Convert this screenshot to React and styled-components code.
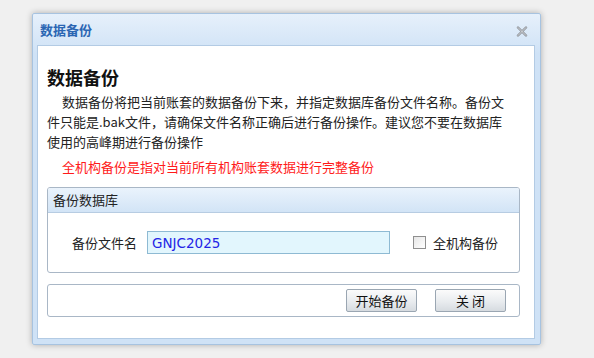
import React from "react";
import styled, { createGlobalStyle } from "styled-components";

const Global = createGlobalStyle`
  html, body { margin: 0; padding: 0; background: #f0f0f0; }
  body { font-family: "Noto Sans CJK SC", "Microsoft YaHei", sans-serif; font-size: 13px; color: #222; }
`;

const Page = styled.div`
  width: 594px;
  height: 358px;
  padding: 13px 0 0 32px;
  box-sizing: border-box;
`;

const Window = styled.div`
  width: 509px;
  height: 332px;
  box-sizing: border-box;
  border: 1px solid #a7c3e0;
  border-radius: 2px;
  background: linear-gradient(#e6f0fb, #cfe2f6 40px, #cfe2f6);
  box-shadow: 0 0 6px rgba(0,0,0,0.28);
  display: flex;
  flex-direction: column;
  padding: 0 5px 5px 4px;
`;

const TitleBar = styled.div`
  height: 31px;
  display: flex;
  align-items: center;
  justify-content: space-between;
  padding: 0 6px 0 3px;
`;

const Title = styled.span`
  font-weight: bold;
  font-size: 13px;
  color: #2b66b3;
`;

const Close = styled.span`
  width: 14px;
  height: 14px;
  display: flex;
  align-items: center;
  justify-content: center;
  margin-top: 3px;
`;

const Content = styled.div`
  flex: 1;
  background: #fff;
  border: 1px solid #b3cbe4;
  padding: 19px 14px 0 9px;
  display: flex;
  flex-direction: column;
`;

const Heading = styled.h1`
  margin: 0;
  font-size: 18px;
  line-height: 24px;
  font-weight: bold;
  color: #111;
`;

const Para = styled.p`
  margin: 3px 0 0;
  line-height: 20px;
  text-indent: 15px;
  color: #222;
`;

const Warn = styled.p`
  margin: 5px 0 0;
  padding-left: 15px;
  line-height: 20px;
  color: #ff1a1a;
`;

const Panel = styled.div`
  margin-top: ${p => p.$gap}px;
  border: 1px solid #a9b7c6;
  border-radius: 3px;
  background: #fff;
  overflow: hidden;
`;

const PanelHead = styled.div`
  height: 24px;
  line-height: 24px;
  padding-left: 5px;
  background: linear-gradient(#eaf3fc, #d2e4f6);
  border-bottom: 1px solid #b7cce2;
  color: #222;
`;

const FieldRow = styled.div`
  height: 59px;
  display: flex;
  align-items: center;
  padding-left: 24px;
  box-sizing: border-box;
`;

const Label = styled.label`
  width: 65px;
  margin-right: 10px;
`;

const Input = styled.input`
  width: 243px;
  height: 23px;
  box-sizing: border-box;
  border: 1px solid #8ebad3;
  background: #e2f6fd;
  color: #2424e6;
  font-family: "DejaVu Sans", Tahoma, sans-serif;
  font-size: 13.5px;
  padding: 0 0 0 4px;
  outline: none;
`;

const Check = styled.span`
  width: 13px;
  height: 13px;
  box-sizing: border-box;
  border: 1px solid #8f8f8f;
  background: linear-gradient(135deg, #e6e6e6, #ffffff);
  margin: 0 7px 0 23px;
`;

const ButtonBar = styled.div`
  height: 31px;
  display: flex;
  align-items: center;
  justify-content: flex-end;
  gap: 18px;
  padding-right: 13px;
`;

const Button = styled.button`
  width: 71px;
  height: 23px;
  box-sizing: border-box;
  border: 1px solid #9aa6b2;
  border-radius: 2px;
  background: linear-gradient(#fbfbfb, #e9ecef 55%, #d6dbe0);
  font-family: "Noto Sans CJK SC", sans-serif;
  font-size: 13px;
  color: #111;
  padding: 0;
  line-height: 21px;
`;

export default function App() {
  return (
    <Page>
      <Global />
      <Window>
        <TitleBar>
          <Title>数据备份</Title>
          <Close>
            <svg width="12" height="11" viewBox="0 0 12 11">
              <path d="M2 1.5 L10 9.5 M10 1.5 L2 9.5" stroke="#8a8f96" strokeWidth="2.4" strokeLinecap="round" />
              <path d="M2 1.5 L10 9.5 M10 1.5 L2 9.5" stroke="#e8eaec" strokeWidth="0.8" strokeLinecap="round" />
            </svg>
          </Close>
        </TitleBar>
        <Content>
          <Heading>数据备份</Heading>
          <Para>
            数据备份将把当前账套的数据备份下来，并指定数据库备份文件名称。备份文<br />
            件只能是.bak文件，请确保文件名称正确后进行备份操作。建议您不要在数据库<br />
            使用的高峰期进行备份操作
          </Para>
          <Warn>全机构备份是指对当前所有机构账套数据进行完整备份</Warn>
          <Panel $gap={10}>
            <PanelHead>备份数据库</PanelHead>
            <FieldRow>
              <Label>备份文件名</Label>
              <Input defaultValue="GNJC2025" />
              <Check />
              <span>全机构备份</span>
            </FieldRow>
          </Panel>
          <Panel $gap={11}>
            <ButtonBar>
              <Button>开始备份</Button>
              <Button>关 闭</Button>
            </ButtonBar>
          </Panel>
        </Content>
      </Window>
    </Page>
  );
}
